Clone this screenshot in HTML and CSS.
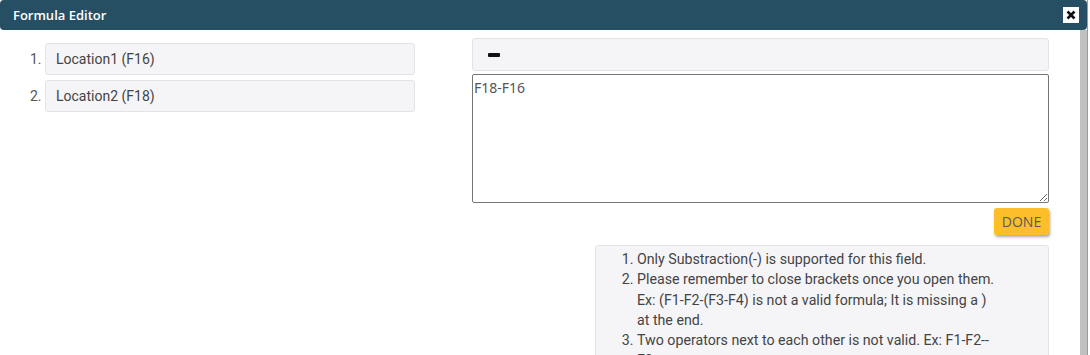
FILE: index.html
```html
<!DOCTYPE html>
<html>
<head>
<meta charset="utf-8">
<link rel="stylesheet" href="styles.css">
</head>
<body>
<div class="page">
  <div class="dialog">
    <div class="titlebar">
      <span class="title">Formula Editor</span>
      <button class="close" aria-label="Close">
        <svg width="10" height="10" viewBox="0 0 10 10"><path d="M1.5 1.5 L8.5 8.5 M8.5 1.5 L1.5 8.5" stroke="#111" stroke-width="2.6" stroke-linecap="butt"/></svg>
      </button>
    </div>
    <div class="body">
      <div class="main">
        <div class="left">
          <ol class="fields">
            <li><div class="field">Location1 (F16)</div></li>
            <li><div class="field">Location2 (F18)</div></li>
          </ol>
        </div>
        <div class="right">
          <div class="operators"><span class="op"></span></div>
          <textarea class="formula">F18-F16</textarea>
          <div class="actions"><button class="done">DONE</button></div>
          <div class="notes">
            <ol>
              <li>Only Substraction(-) is supported for this field.</li>
              <li>Please remember to close brackets once you open them. Ex: (F1-F2-(F3-F4) is not a valid formula; It is missing a ) at the end.</li>
              <li>Two operators next to each other is not valid. Ex: F1-F2--F3</li>
            </ol>
          </div>
        </div>
      </div>
      <div class="scrollbar"></div>
    </div>
  </div>
  <div class="backdrop"></div>
</div>
</body>
</html>
```
FILE: styles.css
```css
html, body {
  margin: 0;
  padding: 0;
  background: #fff;
  height: 355px;
  overflow: hidden;
}
.page {
  display: flex;
  height: 355px;
}
.dialog {
  width: 1087px;
  flex: none;
  display: flex;
  flex-direction: column;
  background: #fff;
}
.backdrop {
  flex: 1;
  background: #fff;
  border-left: 1px solid #9a9a9a;
}
.titlebar {
  height: 30px;
  flex: none;
  background: #264f63;
  border-radius: 4px;
  display: flex;
  align-items: center;
  justify-content: space-between;
  padding: 0 8px 0 13px;
}
.title {
  color: #fff;
  font-family: "Open Sans", sans-serif;
  font-weight: 600;
  font-size: 13px;
}
.close {
  width: 16px;
  height: 16px;
  padding: 0;
  border: none;
  background: #fff;
  display: flex;
  align-items: center;
  justify-content: center;
}
.body {
  flex: 1;
  display: flex;
  min-height: 0;
}
.main {
  flex: 1;
  display: flex;
  font-family: Roboto, sans-serif;
  color: #444;
  overflow: hidden;
}
.scrollbar {
  width: 7px;
  flex: none;
  background: #c1c1c1;
}
.left {
  width: 472px;
  flex: none;
}
.fields {
  margin: 13px 0 0;
  padding: 0 0 0 45px;
  width: 370px;
  font-size: 14px;
}
.fields li {
  margin-bottom: 5px;
}
.fields li::marker {
  color: #555;
}
.field {
  height: 30px;
  line-height: 30px;
  background: #f5f5f8;
  border: 1px solid #e2e2e8;
  border-radius: 3px;
  padding: 0 10px;
}
.right {
  width: 577px;
  flex: none;
  padding-top: 8px;
  display: flex;
  flex-direction: column;
}
.right > * {
  flex: none;
}
.operators {
  height: 31px;
  background: #f5f5f8;
  border: 1px solid #e2e2e8;
  border-radius: 3px;
  display: flex;
  align-items: center;
  padding-left: 15px;
}
.op {
  width: 12px;
  height: 4px;
  background: #111;
  border-radius: 1px;
}
.formula {
  margin: 3px 0 0;
  height: 129px;
  box-sizing: border-box;
  border: 1px solid #767676;
  border-radius: 2px;
  padding: 3px 1px;
  font-family: "Noto Sans", sans-serif;
  font-size: 14px;
  color: #555;
  resize: vertical;
}
.actions {
  display: flex;
  justify-content: flex-end;
  margin-top: 5px;
}
.done {
  width: 55px;
  height: 27px;
  border: none;
  border-radius: 3px;
  background: #fcbf2b;
  color: #5a5a5a;
  font-family: "Open Sans", sans-serif;
  font-size: 14px;
  box-shadow: 1px 2px 3px rgba(0,0,0,0.35);
  padding: 0;
}
.notes {
  margin: 10px 0 0 123px;
  background: #f5f5f8;
  border: 1px solid #e2e2e8;
  border-radius: 3px;
  height: 200px;
}
.notes ol {
  margin: 3px 0 0;
  padding: 0 50px 0 41px;
  font-size: 14.2px;
  line-height: 20.3px;
  color: #444;
}
```
